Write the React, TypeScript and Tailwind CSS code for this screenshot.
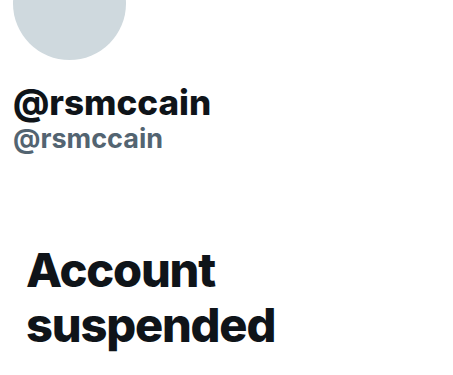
export default function App() {
  return (
    <div className="w-[453px] h-[375px] overflow-hidden bg-white" style={{ fontFamily: "Inter, 'Liberation Sans', sans-serif" }}>
      <div className="px-[13px]">
        <div className="w-[113px] h-[113px] -mt-[53px] rounded-full bg-[#cfd9de]" />
        <div className="mt-[22px] text-[35px] leading-[40px] font-extrabold text-[#0f1419] tracking-[0px]">@rsmccain</div>
        <div className="mt-[1px] text-[27px] leading-[32px] font-bold text-[#536471]">@rsmccain</div>
      </div>
      <div className="px-[26px] mt-[87px]">
        <h1 className="text-[47px] leading-[55px] font-extrabold text-[#0f1419] tracking-[-1.2px]">Account suspended</h1>
        <p className="mt-[22px] text-[20px] leading-[26px] text-[#536471]">
          <span className="text-[#1d9bf0]">X</span> suspends accounts that violate the X Rules.
        </p>
      </div>
    </div>
  );
}
